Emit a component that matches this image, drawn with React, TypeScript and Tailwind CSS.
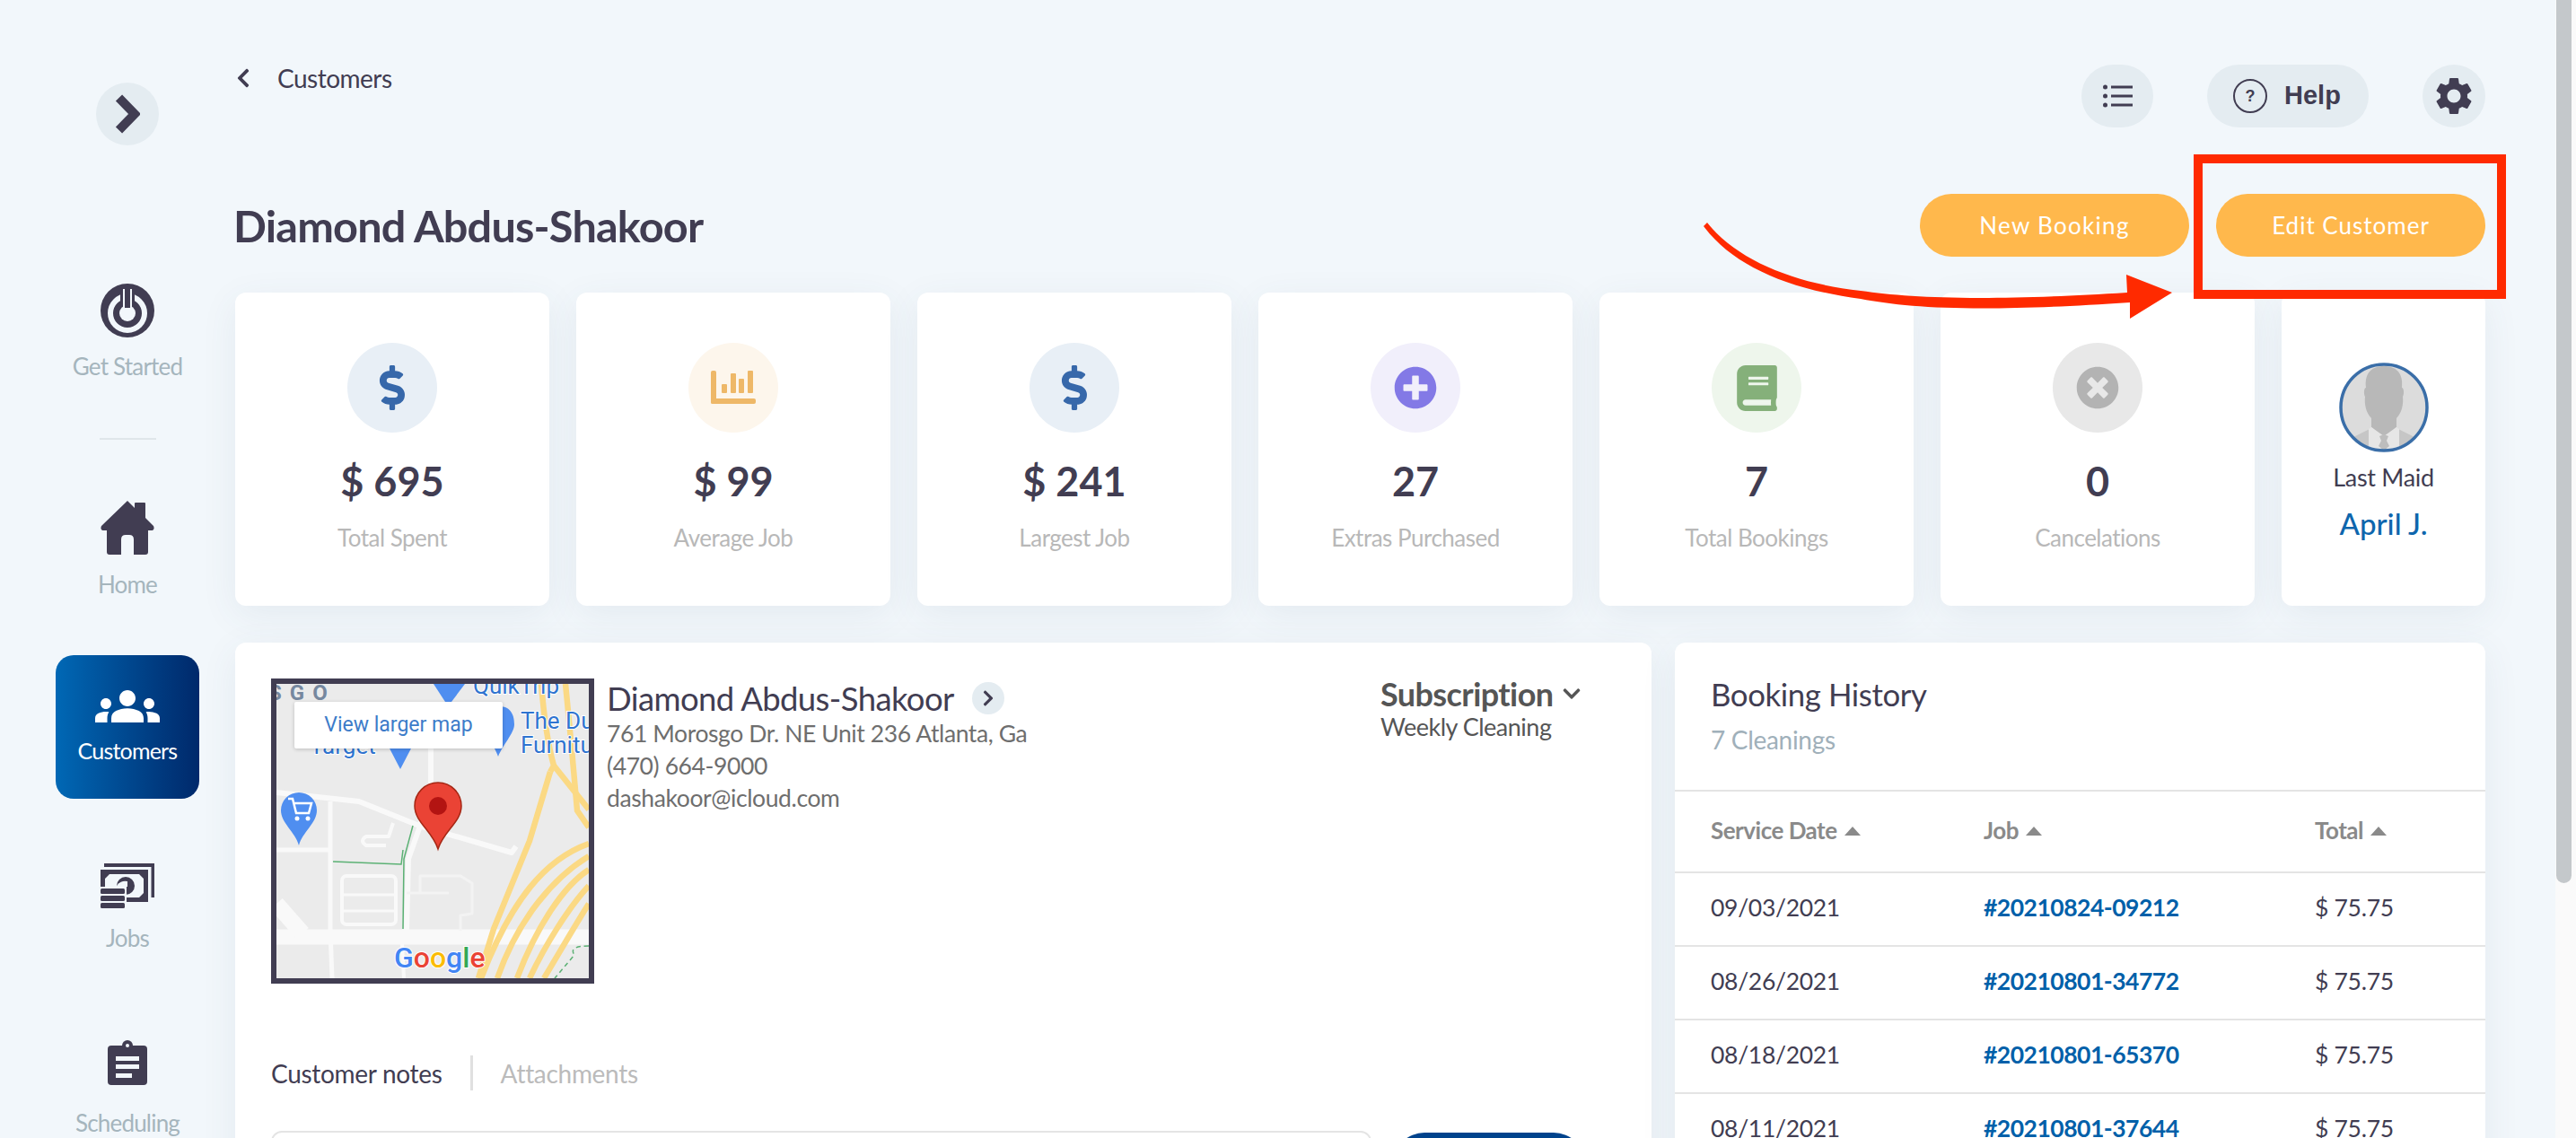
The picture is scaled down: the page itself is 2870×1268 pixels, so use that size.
import { ReactNode } from "react";
import { FaBook, FaChevronLeft, FaChevronRight, FaChevronDown, FaDollarSign, FaPlusCircle, FaTimesCircle } from "react-icons/fa";
import { MdGroups, MdSettings } from "react-icons/md";

const stats = [
    { value: "$ 695", label: "Total Spent", bg: "bg-[#e8eff6]", icon: <FaDollarSign className="h-[50px] w-[50px] text-[#3768aa]" /> },
    { value: "$ 99", label: "Average Job", bg: "bg-[#fdf6ec]", icon: <ChartIcon /> },
    { value: "$ 241", label: "Largest Job", bg: "bg-[#e8eff6]", icon: <FaDollarSign className="h-[50px] w-[50px] text-[#3768aa]" /> },
    { value: "27", label: "Extras Purchased", bg: "bg-[#f1effb]", icon: <FaPlusCircle className="h-[48px] w-[48px] text-[#8379e6]" /> },
    { value: "7", label: "Total Bookings", bg: "bg-[#eef6ec]", icon: <FaBook className="h-[51px] w-[51px] text-[#85b07a]" /> },
    { value: "0", label: "Cancelations", bg: "bg-[#e8e8e8]", icon: <FaTimesCircle className="h-[48px] w-[48px] text-[#b3b3b3]" /> },
];

const bookings = [
    { date: "09/03/2021", job: "#20210824-09212", total: "$ 75.75" },
    { date: "08/26/2021", job: "#20210801-34772", total: "$ 75.75" },
    { date: "08/18/2021", job: "#20210801-65370", total: "$ 75.75" },
    { date: "08/11/2021", job: "#20210801-37644", total: "$ 75.75" },
];

function ChartIcon() {
    return (
        <svg width="50" height="38" viewBox="0 0 50 38" fill="#eeb868">
            <rect x="0" y="0" width="6" height="37" rx="2" />
            <rect x="0" y="31" width="50" height="6" rx="2" />
            <rect x="12" y="15" width="6" height="10" rx="1" />
            <rect x="22" y="3" width="6" height="22" rx="1" />
            <rect x="31" y="9" width="6" height="16" rx="1" />
            <rect x="41" y="0" width="6" height="25" rx="1" />
        </svg>
    );
}

function ToggleChevron() {
    return (
        <svg width="28" height="44" viewBox="0 0 28 44">
            <path d="M4.5 4 L22 22 L4.5 40" fill="none" stroke="#413d52" strokeWidth="10" />
        </svg>
    );
}

function PowerIcon() {
    return (
        <svg width="60" height="60" viewBox="0 0 60 60">
            <circle cx="30" cy="30" r="30" fill="#413d52" />
            <circle cx="30" cy="33" r="19" fill="none" stroke="#f2f7fb" strokeWidth="6" />
            <rect x="22" y="4" width="16" height="20" fill="#413d52" />
            <circle cx="30" cy="33" r="9" fill="#f2f7fb" />
            <rect x="25" y="6" width="2.5" height="20" fill="#f2f7fb" />
            <rect x="32.5" y="6" width="2.5" height="20" fill="#f2f7fb" />
            <rect x="27" y="6" width="6" height="21" fill="#413d52" />
        </svg>
    );
}

function HomeIcon() {
    return (
        <svg width="60" height="60" viewBox="0 0 60 60">
            <path d="M30 0 L38 8 V3 Q38 2 39 2 H49 Q50 2 50 3 V19 L59 28 Q61 33 56 33 H53 V57 Q53 60 50 60 H37 V43 Q37 38 32 38 H28 Q23 38 23 43 V60 H10 Q7 60 7 57 V33 H4 Q-1 33 1 28 Z" fill="#413d52" />
        </svg>
    );
}

function JobsIcon() {
    return (
        <svg width="60" height="50" viewBox="0 0 60 50">
            <rect x="4" y="0" width="56" height="4" fill="#413d52" />
            <rect x="56.5" y="0" width="3.5" height="38" fill="#413d52" />
            <rect x="0" y="7" width="53" height="36" fill="#413d52" />
            <path d="M10 12 H43 L48 17 V33 L43 38 H28 V26 H5 V17 Z" fill="#f2f7fb" />
            <circle cx="28" cy="25" r="10" fill="#413d52" />
            <path d="M18 25 A10 8 0 0 1 30 20 L30 26 L18 26 Z" fill="#f2f7fb" />
            <rect x="0" y="26" width="29" height="24" fill="#f2f7fb" />
            <rect x="0" y="28" width="27" height="6" rx="1.5" fill="#413d52" />
            <rect x="0" y="36" width="27" height="6" rx="1.5" fill="#413d52" />
            <rect x="0" y="44" width="27" height="6" rx="1.5" fill="#413d52" />
        </svg>
    );
}

function ClipboardIcon() {
    return (
        <svg width="44" height="50" viewBox="0 0 44 50">
            <rect x="0" y="6" width="44" height="44" rx="4" fill="#413d52" />
            <circle cx="22" cy="6" r="6" fill="#413d52" />
            <circle cx="22" cy="6" r="2" fill="#f2f7fb" />
            <rect x="9" y="18" width="26" height="5" fill="#f2f7fb" />
            <rect x="9" y="27" width="26" height="5" fill="#f2f7fb" />
            <rect x="9" y="37" width="18" height="5" fill="#f2f7fb" />
        </svg>
    );
}

function ListIcon() {
    return (
        <svg width="33" height="26" viewBox="0 0 33 26" fill="#413d52">
            <circle cx="2.5" cy="3" r="2.5" />
            <circle cx="2.5" cy="13" r="2.5" />
            <circle cx="2.5" cy="23" r="2.5" />
            <rect x="9" y="1.5" width="24" height="3" />
            <rect x="9" y="11.5" width="24" height="3" />
            <rect x="9" y="21.5" width="24" height="3" />
        </svg>
    );
}

function Avatar() {
    return (
        <svg width="100" height="100" viewBox="0 0 100 100">
            <defs>
                <clipPath id="avatar-clip">
                    <circle cx="50" cy="50" r="47" />
                </clipPath>
            </defs>
            <circle cx="50" cy="50" r="47" fill="#dcdcdc" />
            <g clipPath="url(#avatar-clip)">
                <path d="M10 86 L34 74 L66 74 L90 86 V100 H10 Z" fill="#c6c6c6" />
                <path d="M36 72 V62 C30 56 28 46 29 38 C27 34 28 28 30 28 C28 10 38 4 50 4 C62 4 72 10 70 28 C72 28 73 34 71 38 C72 46 70 56 64 62 V72 L50 82 Z" fill="#b8b8b8" />
                <path d="M33 74 L36 72 L50 82 L64 72 L67 74 V100 H33 Z" fill="#e6e6e6" />
                <path d="M45 82 L50 80 L55 82 L53 87 L56 93 L50 98 L44 93 L47 87 Z" fill="#bdbdbd" />
            </g>
            <circle cx="50" cy="50" r="48" fill="none" stroke="#3a6ea8" strokeWidth="3.5" />
        </svg>
    );
}

function SideItem({ icon, label, className, labelClass }: { icon: ReactNode; label: string; className: string; labelClass: string }) {
    return (
        <div className={`flex flex-col items-center ${className}`}>
            <div className="flex h-[60px] items-center justify-center">{icon}</div>
            <div className={`text-[26px] leading-[30px] tracking-[-0.8px] text-[#a5b5bd] ${labelClass}`}>{label}</div>
        </div>
    );
}

function MapPreview() {
    return (
        <div className="relative h-[340px] w-[360px] shrink-0 overflow-hidden border-[6px] border-[#413d52] [font-family:Roboto,sans-serif]">
            <svg width="348" height="328" viewBox="0 0 348 328" className="block">
                <rect width="348" height="328" fill="#ebebeb" />
                <g fill="none" stroke="#f9f9f9" strokeLinejoin="round">
                    <path d="M0 121 L92 131 L159 158 L262 188 L267 181" strokeWidth="6" />
                    <path d="M60 131 V275 L62 328" strokeWidth="5" />
                    <path d="M0 185 H60" strokeWidth="5" />
                    <path d="M172 60 V111 L159 161 L147 195 L145 275" strokeWidth="6" />
                    <path d="M0 282 H348" strokeWidth="17" />
                    <path d="M0 245 L29 278" strokeWidth="18" />
                    <path d="M140 290 L142 328" strokeWidth="4" />
                    <rect x="73" y="214" width="60" height="54" rx="5" strokeWidth="4" />
                    <path d="M73 235 H133 M73 253 H133" strokeWidth="3" />
                    <path d="M145 233 H192 M160 233 V214 H205 L218 222 V256 L205 258 V275" strokeWidth="3" stroke="#f3f3f3" />
                    <path d="M130 155 L125 170 H100 Q92 175 100 180 H122" strokeWidth="4" />
                </g>
                <path d="M63 198 L139 201 L141 185 M152 158 L142 195 L141 273" fill="none" stroke="#5bb174" strokeWidth="1.5" />
                <g fill="none" stroke="#fbd984" strokeWidth="6.5">
                    <path d="M305 98 L282 175 L242 273 L225 328" />
                    <path d="M295 0 Q300 60 309 91 L305 98" />
                    <path d="M322 0 Q328 60 335 141 L348 160" />
                    <path d="M309 91 L348 140" />
                    <path d="M348 178 C300 195 262 240 228 328" />
                    <path d="M348 192 C310 215 270 260 246 328" />
                    <path d="M348 207 C320 225 290 270 268 328" />
                    <path d="M348 225 C325 250 300 290 282 328" />
                    <path d="M348 245 C335 265 315 300 298 328" />
                </g>
                <path d="M348 292 Q325 292 332 302 L310 328" fill="none" stroke="#5bb174" strokeWidth="1.5" strokeDasharray="5 4" />
                <g fill="#4f8ef0">
                    <path d="M175 0 H210 L195 20 H188 Z" />
                    <path d="M125 70 H151 L138 95 Z" />
                    <path d="M248 25 C262 25 265 36 265 45 C265 55 252 68 247 81 C243 68 230 55 230 45 C230 36 236 25 248 25 Z" />
                    <path d="M5 141 A20 20 0 1 1 45 141 C45 155 29 165 25 180 C21 165 5 155 5 141 Z" />
                </g>
                <path d="M13 128 H18 L22 144 H36 L39 133 H20" fill="none" stroke="#ffffff" strokeWidth="2.5" />
                <circle cx="23" cy="150" r="2.5" fill="#ffffff" />
                <circle cx="35" cy="150" r="2.5" fill="#ffffff" />
                <path d="M154 136 A26 26 0 1 1 206 136 C206 154 186 164 180 184 C174 164 154 154 154 136 Z" fill="#ea4335" stroke="#a52714" strokeWidth="1.5" />
                <circle cx="180" cy="136" r="10" fill="#b31412" />
                <text x="-9" y="18" fontSize="24" fontWeight="700" letterSpacing="9" fill="#76889f">SGO</text>
                <g fill="#2f74d0" stroke="#ffffff" strokeWidth="2" style={{ paintOrder: "stroke" }} fontSize="26">
                    <text x="219" y="11">QuikTrip</text>
                    <text x="272" y="50">The Du</text>
                    <text x="272" y="77">Furnitu</text>
                    <text x="37" y="78">Target</text>
                </g>
                <text x="131" y="316" fontSize="32" fontWeight="500" stroke="#ffffff" strokeWidth="2" style={{ paintOrder: "stroke" }}>
                    <tspan fill="#4285f4">G</tspan>
                    <tspan fill="#ea4335">o</tspan>
                    <tspan fill="#fbbc05">o</tspan>
                    <tspan fill="#4285f4">g</tspan>
                    <tspan fill="#34a853">l</tspan>
                    <tspan fill="#ea4335">e</tspan>
                </text>
            </svg>
            <div className="absolute left-[20px] top-[20px] flex h-[52px] w-[232px] items-center justify-center rounded-[2px] bg-white text-[23px] text-[#3d7cc9] shadow-[0_1px_4px_rgba(0,0,0,0.2)]">
                View larger map
            </div>
        </div>
    );
}

export default function App() {
    return (
        <div className="relative flex h-[1268px] w-[2870px] overflow-hidden bg-[#f2f7fb] text-[#413d52] [font-family:Lato,sans-serif]">
            <aside className="flex w-[262px] shrink-0 flex-col items-center pl-[22px]">
                <div className="mt-[92px] flex h-[70px] w-[70px] items-center justify-center rounded-full bg-[#e4ecf1]">
                    <ToggleChevron />
                </div>
                <SideItem className="mt-[154px]" labelClass="mt-[17px]" icon={<PowerIcon />} label="Get Started" />
                <div className="mt-[65px] h-[2px] w-[63px] bg-[#dfe6ea]" />
                <SideItem className="mt-[68px]" labelClass="mt-[18px]" icon={<HomeIcon />} label="Home" />
                <div className="mt-[64px] flex h-[160px] w-[160px] shrink-0 flex-col items-center rounded-[20px] bg-gradient-to-r from-[#0068b5] to-[#00296b] pt-[27px] text-white">
                    <MdGroups className="-my-[6px] h-[72px] w-[72px]" />
                    <div className="mt-[4px] text-[25px] leading-[30px] tracking-[-0.8px]">Customers</div>
                </div>
                <SideItem className="mt-[67px]" labelClass="mt-[13px]" icon={<JobsIcon />} label="Jobs" />
                <SideItem className="mt-[94px]" labelClass="mt-[22px]" icon={<ClipboardIcon />} label="Scheduling" />
            </aside>

            <main className="w-[2507px] shrink-0">
                <div className="flex items-start justify-between pt-[72px]">
                    <div className="flex h-[30px] items-center gap-[29px]">
                        <FaChevronLeft className="h-[24px] w-[18px] text-[#413d52]" />
                        <span className="text-[28px] tracking-[-0.5px]">Customers</span>
                    </div>
                    <div className="flex gap-[60px]">
                        <div className="flex h-[70px] w-[80px] items-center justify-center rounded-full bg-[#e4ecf1]">
                            <ListIcon />
                        </div>
                        <div className="flex h-[70px] w-[180px] items-center gap-[19px] rounded-full bg-[#e4ecf1] pl-[29px] [font-family:'Liberation_Sans',sans-serif]">
                            <div className="flex h-[38px] w-[38px] items-center justify-center rounded-full border-2 border-[#413d52] text-[18px] font-bold">?</div>
                            <span className="text-[29px] font-bold">Help</span>
                        </div>
                        <div className="flex h-[70px] w-[70px] items-center justify-center rounded-full bg-[#e4ecf1]">
                            <MdSettings className="h-[50px] w-[50px] text-[#413d52]" />
                        </div>
                    </div>
                </div>

                <div className="mt-[74px] flex h-[70px] items-center justify-between">
                    <h1 className="-ml-[2px] text-[48.6px] font-bold tracking-[-0.8px]">Diamond Abdus-Shakoor</h1>
                    <div className="flex gap-[30px]">
                        <button className="h-[70px] w-[300px] rounded-full bg-[#ffb84c] text-[26px] tracking-[1.3px] text-white">New Booking</button>
                        <button className="h-[70px] w-[300px] rounded-full bg-[#ffb84c] text-[26px] tracking-[1px] text-white">Edit Customer</button>
                    </div>
                </div>

                <div className="mt-[40px] flex gap-[30px]">
                    {stats.map((s) => (
                        <div key={s.label} className="flex h-[349px] w-[350px] flex-col items-center rounded-[12px] bg-white pt-[56px] shadow-[0_10px_40px_rgba(60,90,120,0.08)]">
                            <div className={`flex h-[100px] w-[100px] items-center justify-center rounded-full ${s.bg}`}>{s.icon}</div>
                            <div className="mt-[26px] text-[45px] font-bold leading-[56px]">{s.value}</div>
                            <div className="mt-[20px] text-[26px] leading-[30px] tracking-[-0.5px] text-[#b8b8b8]">{s.label}</div>
                        </div>
                    ))}
                    <div className="flex h-[349px] w-[227px] flex-col items-center rounded-[12px] bg-white pt-[78px] shadow-[0_10px_40px_rgba(60,90,120,0.08)]">
                        <Avatar />
                        <div className="mt-[11px] text-[27px] leading-[34px] tracking-[-0.3px]">Last Maid</div>
                        <div className="mt-[14px] text-[33px] font-medium leading-[40px] text-[#0e66ad]">April J.</div>
                    </div>
                </div>

                <div className="mt-[41px] flex gap-[26px]">
                    <section className="h-[700px] w-[1578px] rounded-[12px] bg-white pl-[40px] pt-[40px] shadow-[0_10px_40px_rgba(60,90,120,0.08)]">
                        <div className="flex">
                            <MapPreview />
                            <div className="ml-[14px] w-[862px]">
                                <div className="mt-[2px] flex h-[40px] items-center gap-[20px]">
                                    <span className="text-[36.5px] tracking-[-0.6px]">Diamond Abdus-Shakoor</span>
                                    <span className="flex h-[36px] w-[36px] items-center justify-center rounded-full bg-[#e4ecf1]">
                                        <FaChevronRight className="h-[20px] w-[20px]" />
                                    </span>
                                </div>
                                <div className="mt-[1px] text-[26.5px] leading-[36px] tracking-[-0.4px] text-[#6e6e6e]">
                                    <div>761 Morosgo Dr. NE Unit 236 Atlanta, Ga</div>
                                    <div>(470) 664-9000</div>
                                    <div>dashakoor@icloud.com</div>
                                </div>
                            </div>
                            <div className="-mt-[2px]">
                                <div className="flex h-[38px] items-center gap-[10px] text-[#555555]">
                                    <span className="text-[36px] font-bold tracking-[-0.6px]">Subscription</span>
                                    <FaChevronDown className="h-[22px] w-[22px]" />
                                </div>
                                <div className="text-[27px] leading-[36px] tracking-[-0.5px] text-[#555555]">Weekly Cleaning</div>
                            </div>
                        </div>

                        <div className="mt-[80px] flex h-[39px] items-center">
                            <span className="text-[28px] tracking-[-0.3px]">Customer notes</span>
                            <span className="ml-[31px] h-[39px] w-[3px] bg-[#e0e0e0]" />
                            <span className="ml-[31px] text-[28px] tracking-[-0.3px] text-[#bbbbbb]">Attachments</span>
                        </div>

                        <div className="mt-[45px] flex gap-[24px]">
                            <div className="h-[120px] w-[1226px] rounded-[12px] border-2 border-[#e4e4e4]" />
                            <div className="mt-[2px] h-[70px] w-[214px] rounded-full bg-[#00438c]" />
                        </div>
                    </section>

                    <section className="h-[700px] w-[903px] rounded-[12px] bg-white shadow-[0_10px_40px_rgba(60,90,120,0.08)]">
                        <div className="h-[164px] pl-[40px] pt-[36px]">
                            <div className="text-[34.8px] leading-[44px] tracking-[-0.4px]">Booking History</div>
                            <div className="mt-[11px] text-[28px] leading-[34px] tracking-[-0.3px] text-[#a0b0ba]">7 Cleanings</div>
                        </div>
                        <div className="grid h-[91px] grid-cols-[304px_369px_1fr] items-center border-t-2 border-[#e4e4e4] pb-[2px] pl-[40px] text-[26px] font-bold tracking-[-0.5px] text-[#8a8a8a]">
                            {["Service Date", "Job", "Total"].map((h) => (
                                <div key={h} className="flex items-center gap-[8px]">
                                    {h}
                                    <span className="h-0 w-0 border-x-[9px] border-b-[10px] border-x-transparent border-b-[#8a8a8a]" />
                                </div>
                            ))}
                        </div>
                        {bookings.map((b) => (
                            <div key={b.job} className="grid h-[82px] grid-cols-[304px_369px_1fr] items-center border-t-2 border-[#e4e4e4] pb-[2px] pl-[40px] text-[26.5px]">
                                <div className="tracking-[-0.3px]">{b.date}</div>
                                <div className="font-bold tracking-[-0.5px] text-[#0060a9]">{b.job}</div>
                                <div className="tracking-[-0.3px]">{b.total}</div>
                            </div>
                        ))}
                    </section>
                </div>
            </main>

            <div className="ml-[78px] h-full w-[23px] shrink-0 bg-[#fafafa] pl-[1px]">
                <div className="h-[984px] w-[17px] rounded-b-full bg-[#c4c8cb]" />
            </div>

            <div className="absolute left-[2444px] top-[172px] h-[161px] w-[348px] border-[10px] border-[#ff2a00]" />
            <svg className="absolute left-[1890px] top-[240px]" width="540" height="125" viewBox="1890 240 540 125">
                <path d="M1902 248 C1935 290 2000 316 2073 324 C2130 332 2210 336 2370 326 L2369 306 L2420 326 L2373 355 L2373 337 C2210 348 2130 344 2073 333 C1990 322 1930 295 1898 252 Z" fill="#ff2a00" />
            </svg>
        </div>
    );
}
